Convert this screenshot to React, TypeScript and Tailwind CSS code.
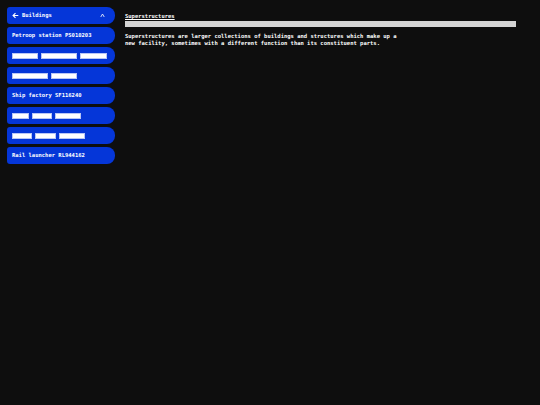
import React from "react";

type Item = { label?: string; blocks?: number[] };

const items: Item[] = [
  { label: "Petroop station PS010203" },
  { blocks: [26, 36, 27] },
  { blocks: [36, 26] },
  { label: "Ship factory SF116240" },
  { blocks: [17, 20, 26] },
  { blocks: [20, 21, 26] },
  { label: "Rail launcher RL944162" },
];

function Blocks({ widths }: { widths: number[] }) {
  return (
    <div className="flex items-center gap-[3px]">
      {widths.map((w, i) => (
        <span key={i} className="block h-[6px] bg-white border border-[#b9c6f5]" style={{ width: w }} />
      ))}
    </div>
  );
}

export default function App() {
  return (
    <div
      className="w-[540px] h-[405px] bg-[#0e0e0e] text-white flex"
      style={{ fontFamily: '"DejaVu Sans Mono", "Liberation Mono", monospace' }}
    >
      <nav className="w-[108px] ml-[7px] mt-[7px] flex flex-col gap-[3px] shrink-0">
        <div className="h-[17px] bg-[#0536d8] rounded-l-[3px] rounded-r-[8px] flex items-center px-[5px] text-[5.5px] font-bold">
          <svg width="7" height="7" viewBox="0 0 10 10" className="mr-[3px]">
            <path d="M9 5H1.5M5 1.5 1.5 5 5 8.5" stroke="white" strokeWidth="1.6" fill="none" />
          </svg>
          <span>Buildings</span>
          <svg width="5" height="5" viewBox="0 0 10 10" className="ml-auto mr-[5px]">
            <path d="M1.5 8 5 2 8.5 8" stroke="white" strokeWidth="1.6" fill="none" />
          </svg>
        </div>
        {items.map((it, i) => (
          <div
            key={i}
            className="h-[17px] bg-[#0536d8] rounded-l-[3px] rounded-r-[8px] flex items-center px-[5px] text-[5.5px] font-bold"
          >
            {it.label ? <span>{it.label}</span> : <Blocks widths={it.blocks!} />}
          </div>
        ))}
      </nav>
      <main className="ml-[10px] mt-[13px] w-[391px] text-[5.5px] font-bold leading-[7px]">
        <h1 className="underline">Superstructures</h1>
        <div className="h-[6px] bg-[#d4d4d4] mt-[1px]" />
        <p className="mt-[6px]">
          Superstructures are larger collections of buildings and structures which make up a
          <br />
          new facility, sometimes with a different function than its constituent parts.
        </p>
      </main>
    </div>
  );
}
